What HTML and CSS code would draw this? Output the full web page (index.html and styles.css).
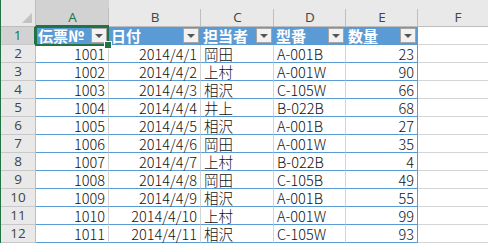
FILE: index.html
```html
<!DOCTYPE html>
<html lang="ja">
<head>
<meta charset="utf-8">
<link rel="stylesheet" href="styles.css">
</head>
<body>
<div class="sheet">
  <div class="corner"><span class="tri"></span></div>
  <div class="ch sel">A</div>
  <div class="ch">B</div>
  <div class="ch">C</div>
  <div class="ch">D</div>
  <div class="ch">E</div>
  <div class="ch">F</div>

  <div class="rh sel">1</div>
  <div class="th active"><span class="lbl">伝票№</span><span class="dd"></span><span class="selbox"></span><span class="handle"></span></div>
  <div class="th"><span class="lbl">日付</span><span class="dd"></span></div>
  <div class="th"><span class="lbl">担当者</span><span class="dd"></span></div>
  <div class="th"><span class="lbl">型番</span><span class="dd"></span></div>
  <div class="th last"><span class="lbl">数量</span><span class="dd"></span></div>
  <div class="f"></div>

  <div class="rh">2</div><div class="td num">1001</div><div class="td num">2014/4/1</div><div class="td">岡田</div><div class="td">A-001B</div><div class="td num last">23</div><div class="f"></div>
  <div class="rh">3</div><div class="td num">1002</div><div class="td num">2014/4/2</div><div class="td">上村</div><div class="td">A-001W</div><div class="td num last">90</div><div class="f"></div>
  <div class="rh">4</div><div class="td num">1003</div><div class="td num">2014/4/3</div><div class="td">相沢</div><div class="td">C-105W</div><div class="td num last">66</div><div class="f"></div>
  <div class="rh">5</div><div class="td num">1004</div><div class="td num">2014/4/4</div><div class="td">井上</div><div class="td">B-022B</div><div class="td num last">68</div><div class="f"></div>
  <div class="rh">6</div><div class="td num">1005</div><div class="td num">2014/4/5</div><div class="td">相沢</div><div class="td">A-001B</div><div class="td num last">27</div><div class="f"></div>
  <div class="rh">7</div><div class="td num">1006</div><div class="td num">2014/4/6</div><div class="td">岡田</div><div class="td">A-001W</div><div class="td num last">35</div><div class="f"></div>
  <div class="rh">8</div><div class="td num">1007</div><div class="td num">2014/4/7</div><div class="td">上村</div><div class="td">B-022B</div><div class="td num last">4</div><div class="f"></div>
  <div class="rh">9</div><div class="td num">1008</div><div class="td num">2014/4/8</div><div class="td">岡田</div><div class="td">C-105B</div><div class="td num last">49</div><div class="f"></div>
  <div class="rh">10</div><div class="td num">1009</div><div class="td num">2014/4/9</div><div class="td">相沢</div><div class="td">A-001B</div><div class="td num last">55</div><div class="f"></div>
  <div class="rh">11</div><div class="td num">1010</div><div class="td num">2014/4/10</div><div class="td">上村</div><div class="td">A-001W</div><div class="td num last">99</div><div class="f"></div>
  <div class="rh">12</div><div class="td num">1011</div><div class="td num">2014/4/11</div><div class="td">相沢</div><div class="td">C-105W</div><div class="td num last">93</div><div class="f"></div>
</div>
</body>
</html>
```
FILE: styles.css
```css
* { box-sizing: border-box; }
html, body {
  margin: 0;
  padding: 0;
  width: 488px;
  height: 245px;
  overflow: hidden;
  background: #ffffff;
}
.sheet {
  display: grid;
  grid-template-columns: 35px 73px 92px 73px 72px 72px 80px;
  grid-template-rows: 27px repeat(12, 18px);
  border-left: 1px solid #217346;
  width: 489px;
  font-family: "Noto Sans CJK JP", "Noto Sans", sans-serif;
  font-size: 14.5px;
  color: #111;
}
.corner {
  background: #e9e9e9;
  border-right: 1px solid #bdbdbd;
  border-bottom: 1px solid #bdbdbd;
  display: flex;
  align-items: flex-end;
  justify-content: flex-end;
  padding: 0 3px 3px 0;
}
.tri {
  width: 0;
  height: 0;
  border-left: 10px solid transparent;
  border-bottom: 10px solid #c2c2c2;
}
.ch {
  background: linear-gradient(#bfbfbf, #bfbfbf) right bottom / 1px 17px no-repeat, #e9e9e9;
  border-bottom: 1px solid #bdbdbd;
  font-family: "Open Sans", "Noto Sans", sans-serif;
  font-size: 13.5px;
  color: #444;
  text-align: center;
  padding-top: 8px;
  line-height: 18px;
}
.ch.sel {
  background: linear-gradient(#bfbfbf, #bfbfbf) right bottom / 1px 17px no-repeat, #d2d2d2;
  border-bottom: 2px solid #217346;
  color: #217346;
}
.rh {
  background: #e9e9e9;
  border-right: 1px solid #bdbdbd;
  border-bottom: 1px solid #c8c8c8;
  font-family: "Open Sans", "Noto Sans", sans-serif;
  font-size: 13.5px;
  color: #444;
  text-align: center;
  line-height: 17px;
}
.rh.sel {
  background: #d2d2d2;
  border-right: 2px solid #217346;
  color: #217346;
}
.th {
  background: #5b9bd5;
  border-bottom: 1px solid #5b9bd5;
  border-right: 1px solid #5b9bd5;
  color: #fff;
  font-weight: bold;
  font-size: 15px;
  display: flex;
  align-items: center;
  justify-content: space-between;
  padding: 0 1px 0 2px;
  line-height: 17px;
}
.th.active { position: relative; }
.dd {
  width: 16px;
  height: 15px;
  background: #f2f2f2;
  border: 1px solid #a6a6a6;
  display: flex;
  align-items: center;
  justify-content: center;
}
.dd::before {
  content: "";
  border-left: 4px solid transparent;
  border-right: 4px solid transparent;
  border-top: 4px solid #555;
}
.selbox {
  position: absolute;
  left: -1px;
  top: -1px;
  right: -1px;
  bottom: -2px;
  border: 2px solid #217346;
}
.handle {
  position: absolute;
  right: -3px;
  bottom: -4px;
  width: 6px;
  height: 6px;
  background: #217346;
  outline: 1px solid #fff;
}
.td {
  border-right: 1px solid #d4d4d4;
  border-bottom: 1px solid #5b9bd5;
  padding: 0 3px;
  line-height: 17px;
  white-space: nowrap;
  font-weight: 300;
}
.num { text-align: right; }
.last { border-right: 1px solid #5b9bd5; }
.f {
  border-right: 1px solid #d4d4d4;
  border-bottom: 1px solid #d4d4d4;
}
```
